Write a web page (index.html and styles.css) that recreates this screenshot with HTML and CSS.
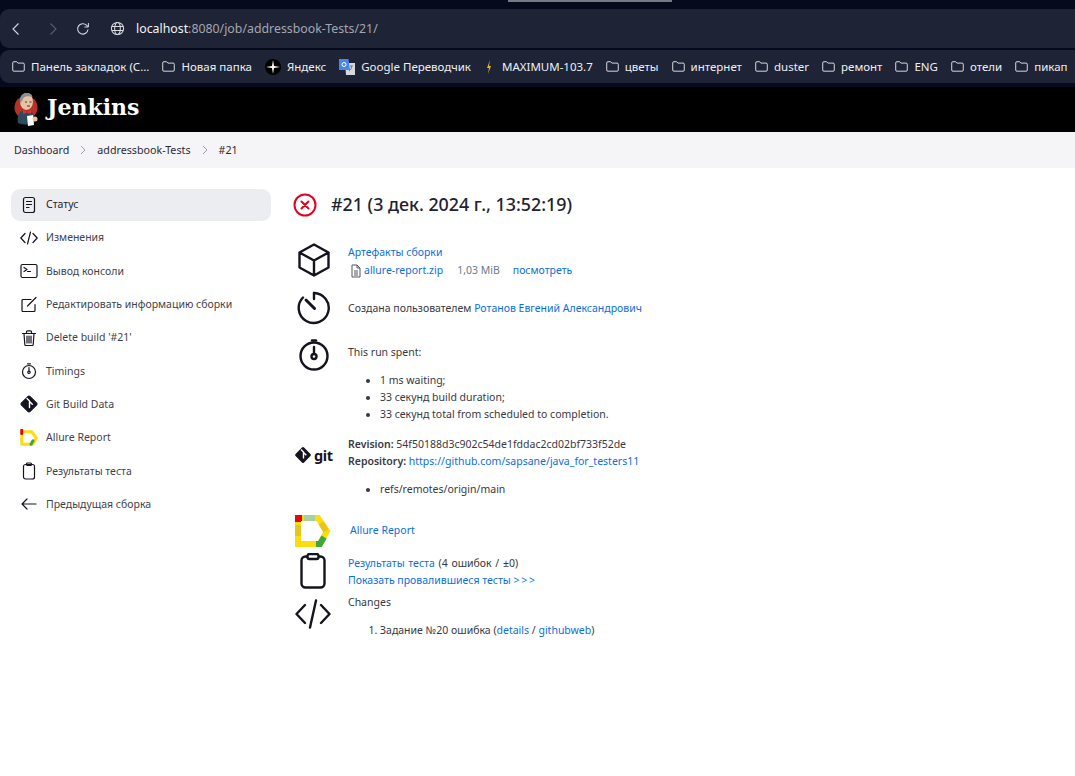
FILE: index.html
```html
<!DOCTYPE html>
<html>
<head>
	<title>Jenkins</title>
	<link rel="stylesheet" href="styles.css">
</head>
<body>
	<div class="chrome">
		<div class="tab-strip"><div class="tab-edge"></div></div>

		<div class="toolbar">
			<svg class="tool tool-back" viewBox="0 0 16 16"><path d="M10.5 2.500 5 8l5.500 5.500"/></svg>
			<svg class="tool tool-forward" viewBox="0 0 16 16"><path d="M5.500 2.500 11 8l-5.500 5.500"/></svg>
			<svg class="tool tool-reload" viewBox="0 0 16 16"><path d="M13 8.500A5.200 5.200 0 1 1 11.500 4.200L13 5.600"/><path d="M13.400 2v4h-4" class="tool-fill"/></svg>
			<svg class="tool tool-globe" viewBox="0 0 16 16"><circle cx="8" cy="8" r="6.500"/><ellipse cx="8" cy="8" rx="3" ry="6.500"/><path d="M2 5.800h12M2 10.200h12"/></svg>
			<div class="url"><span class="url-host">localhost</span>:8080/job/addressbook-Tests/21/</div>
		</div>

		<div class="bookmarks">
			<div class="bookmark"><svg class="folder" viewBox="0 0 14 12"><path d="M.7 2A1.200 1.200 0 0 1 2 .8h3l1.300 1.500h5.700a1.200 1.200 0 0 1 1.300 1.200v6.300a1.200 1.200 0 0 1-1.300 1.300H2A1.200 1.200 0 0 1 .7 9.800z"/></svg>Панель закладок (С...</div>
			<div class="bookmark"><svg class="folder" viewBox="0 0 14 12"><path d="M.7 2A1.200 1.200 0 0 1 2 .8h3l1.300 1.500h5.700a1.200 1.200 0 0 1 1.300 1.200v6.300a1.200 1.200 0 0 1-1.300 1.300H2A1.200 1.200 0 0 1 .7 9.800z"/></svg>Новая папка</div>
			<div class="bookmark"><svg class="fav" viewBox="0 0 16 16"><circle cx="8" cy="8" r="8" fill="#000"/><path d="M8 1 9 7l6 1-6 1-1 6-1-6-6-1 6-1z" fill="#fff"/></svg>Яндекс</div>
			<div class="bookmark"><svg class="fav" viewBox="0 0 16 16"><path d="M6 4h10v12H7z" fill="#d5d8dc"/><path d="M0 0h9.500L11 11H0z" fill="#4a86e8"/><circle cx="5" cy="5.500" r="2" fill="none" stroke="#fff" stroke-width="1"/><path d="M11 7h3M12.500 7c0 3-1 4-2.500 5" fill="none" stroke="#777" stroke-width="1"/></svg>Google Переводчик</div>
			<div class="bookmark"><svg class="fav fav-bolt" viewBox="0 0 10 16"><path d="M6 1 3 9h2l-1 6 3-8H5z" fill="#e8b923"/></svg>MAXIMUM-103.7</div>
			<div class="bookmark"><svg class="folder" viewBox="0 0 14 12"><path d="M.7 2A1.200 1.200 0 0 1 2 .8h3l1.300 1.500h5.700a1.200 1.200 0 0 1 1.300 1.200v6.300a1.200 1.200 0 0 1-1.300 1.300H2A1.200 1.200 0 0 1 .7 9.800z"/></svg>цветы</div>
			<div class="bookmark"><svg class="folder" viewBox="0 0 14 12"><path d="M.7 2A1.200 1.200 0 0 1 2 .8h3l1.300 1.500h5.700a1.200 1.200 0 0 1 1.300 1.200v6.300a1.200 1.200 0 0 1-1.300 1.300H2A1.200 1.200 0 0 1 .7 9.800z"/></svg>интернет</div>
			<div class="bookmark"><svg class="folder" viewBox="0 0 14 12"><path d="M.7 2A1.200 1.200 0 0 1 2 .8h3l1.300 1.500h5.700a1.200 1.200 0 0 1 1.300 1.200v6.300a1.200 1.200 0 0 1-1.300 1.300H2A1.200 1.200 0 0 1 .7 9.800z"/></svg>duster</div>
			<div class="bookmark"><svg class="folder" viewBox="0 0 14 12"><path d="M.7 2A1.200 1.200 0 0 1 2 .8h3l1.300 1.500h5.700a1.200 1.200 0 0 1 1.300 1.200v6.300a1.200 1.200 0 0 1-1.300 1.300H2A1.200 1.200 0 0 1 .7 9.800z"/></svg>ремонт</div>
			<div class="bookmark"><svg class="folder" viewBox="0 0 14 12"><path d="M.7 2A1.200 1.200 0 0 1 2 .8h3l1.300 1.500h5.700a1.200 1.200 0 0 1 1.300 1.200v6.300a1.200 1.200 0 0 1-1.300 1.300H2A1.200 1.200 0 0 1 .7 9.800z"/></svg>ENG</div>
			<div class="bookmark"><svg class="folder" viewBox="0 0 14 12"><path d="M.7 2A1.200 1.200 0 0 1 2 .8h3l1.300 1.500h5.700a1.200 1.200 0 0 1 1.300 1.200v6.300a1.200 1.200 0 0 1-1.300 1.300H2A1.200 1.200 0 0 1 .7 9.800z"/></svg>отели</div>
			<div class="bookmark"><svg class="folder" viewBox="0 0 14 12"><path d="M.7 2A1.200 1.200 0 0 1 2 .8h3l1.300 1.500h5.700a1.200 1.200 0 0 1 1.300 1.200v6.300a1.200 1.200 0 0 1-1.300 1.300H2A1.200 1.200 0 0 1 .7 9.800z"/></svg>пикап</div>
		</div>
	</div>

	<header class="jenkins-header">
		<svg class="jenkins-logo" viewBox="0 0 24 36">
			<circle cx="12" cy="15.500" r="11.500" fill="#b5322a"/>
			<path d="M4 31c-1-5 0-10 4-12l9 1c3 2 4 6 3 11-5 2-11 2-16 0z" fill="#2f4a5c"/>
			<ellipse cx="12.500" cy="9.500" rx="6.500" ry="8.500" fill="#e6c4a2"/>
			<path d="M6 11C5 5 8 1 13 1c3 0 5 1.500 5.500 4C15 3.500 11 4 9.500 6c-1 2-2 4-3.500 5z" fill="#8a8f94"/>
			<path d="M11 10h2M15.500 10h2M13 14h3" stroke="#4a3a30" stroke-width="1" fill="none"/>
			<path d="M9 18l4 2 4-2v4l-4-1.500L9 22z" fill="#d33833"/>
			<path d="M13 24l6-1 1 10-6 1z" fill="#fff"/>
			<circle cx="21" cy="27" r="2.500" fill="#e6c4a2"/>
		</svg>
		<span class="jenkins-name">Jenkins</span>
	</header>

	<nav class="breadcrumbs">
		<span>Dashboard</span>
		<svg class="crumb-sep" viewBox="0 0 8 12"><path d="M2 2l4 4-4 4"/></svg>
		<span>addressbook-Tests</span>
		<svg class="crumb-sep" viewBox="0 0 8 12"><path d="M2 2l4 4-4 4"/></svg>
		<span>#21</span>
	</nav>

	<div class="page">
		<aside class="sidebar">
			<div class="task task-active">
				<svg class="task-icon" viewBox="0 0 18 18"><rect x="3.500" y="1.500" width="11" height="15" rx="2"/><path d="M6.500 5.500h5M6.500 8.500h5M6.500 11.500h2.500"/></svg>
				Статус
			</div>
			<div class="task">
				<svg class="task-icon" viewBox="0 0 18 18"><path d="M5 4.500.8 9 5 13.500M13 4.500 17.200 9 13 13.500M10.500 3 7.500 15"/></svg>
				Изменения
			</div>
			<div class="task">
				<svg class="task-icon" viewBox="0 0 18 18"><rect x="1" y="2.500" width="16" height="13" rx="1.500"/><path d="M4 5.500 7 7.500 4 9.500M7.500 9.500h3"/></svg>
				Вывод консоли
			</div>
			<div class="task">
				<svg class="task-icon" viewBox="0 0 18 18"><path d="M15 9.500v6a1 1 0 0 1-1 1H3a1 1 0 0 1-1-1V5.500a1 1 0 0 1 1-1h8M7.500 11 16 2.500"/></svg>
				Редактировать информацию сборки
			</div>
			<div class="task">
				<svg class="task-icon" viewBox="0 0 18 18"><path d="M2.500 4.500h13M6.500 4.500V2.800a1 1 0 0 1 1-1h3a1 1 0 0 1 1 1v1.700M4 4.500l.8 11a1 1 0 0 0 1 1h6.400a1 1 0 0 0 1-1l.8-11M7 7v7M9 7v7M11 7v7"/></svg>
				Delete build '#21'
			</div>
			<div class="task">
				<svg class="task-icon" viewBox="0 0 18 18"><circle cx="9" cy="10" r="6.500"/><path d="M9 5.500v3.500M7.500 1.800 10.500 1.800"/><circle cx="9" cy="10.300" r="1.200"/></svg>
				Timings
			</div>
			<div class="task">
				<svg class="task-icon git-mark" viewBox="0 0 18 18"><rect x="3" y="3" width="12" height="12" rx="1.500" transform="rotate(45 9 9)"/><path d="M7 3.500 9.500 6v6.500M9.500 6.500l2.800 2.800" class="git-branch"/></svg>
				Git Build Data
			</div>
			<div class="task">
				<svg class="task-icon allure-mark" viewBox="0 0 36 32"><path d="M3.500 3.500h20l9 12.500-7 12.500h-22z" class="allure-base"/><path d="M3.500 0v7" class="allure-red"/><path d="M22 28.500l4-7" class="allure-green"/></svg>
				Allure Report
			</div>
			<div class="task">
				<svg class="task-icon" viewBox="0 0 18 18"><rect x="3.500" y="2.500" width="11" height="14.500" rx="2"/><rect x="6.500" y="1" width="5" height="2.500" rx="1"/></svg>
				Результаты теста
			</div>
			<div class="task">
				<svg class="task-icon" viewBox="0 0 18 18"><path d="M16 9H2M7 4 2 9l5 5"/></svg>
				Предыдущая сборка
			</div>
		</aside>

		<main class="content">
			<h1 class="build-title">
				<svg class="build-status" viewBox="0 0 24 24"><circle cx="12" cy="12" r="10.500"/><path d="M8.500 8.500l7 7M15.500 8.500l-7 7"/></svg>
				<span class="build-name">#21 (3 дек. 2024 г., 13:52:19)</span>
			</h1>

			<section class="row row-artifacts">
				<div class="row-icon">
					<svg class="big-icon" viewBox="0 0 34 34"><path d="M17 1.500 31.500 9.500v15L17 32.500 2.500 24.500v-15zM2.500 9.500 17 17.500 31.500 9.500M17 17.500v15"/></svg>
				</div>
				<div class="row-body">
					<a href="#">Артефакты сборки</a>
					<div class="artifact-line">
						<svg class="file-icon" viewBox="0 0 12 14"><path d="M2 1h5l3 3v9H2zM7 1v3h3M4 7h4M4 9h4M4 11h4"/></svg>
						<a href="#">allure-report.zip</a>
						<span class="file-size">1,03 MiB</span>
						<a href="#">посмотреть</a>
					</div>
				</div>
			</section>

			<section class="row row-user">
				<div class="row-icon">
					<svg class="big-icon" viewBox="0 0 34 34"><path d="M17 2A15 15 0 1 1 6 6.500"/><path d="M17 2v6"/><path d="M9 9l8.500 8.500" class="needle"/></svg>
				</div>
				<div class="row-body">Создана пользователем <a href="#">Ротанов Евгений Александрович</a></div>
			</section>

			<section class="row row-timing">
				<div class="row-icon">
					<svg class="big-icon" viewBox="0 0 34 34"><circle cx="17" cy="18" r="13.500"/><path d="M17 9v7"/><circle cx="17" cy="18.500" r="2.500"/><path d="M15 2.500h4"/></svg>
				</div>
				<div class="row-body row-body-timing">
					This run spent:
					<ul class="plain-list">
						<li>1 ms waiting;</li>
						<li>33 секунд build duration;</li>
						<li>33 секунд total from scheduled to completion.</li>
					</ul>
				</div>
			</section>

			<section class="row row-git">
				<div class="row-icon">
					<svg class="git-logo-mark" viewBox="0 0 18 18"><rect x="3" y="3" width="12" height="12" rx="1.500" transform="rotate(45 9 9)"/><path d="M7 3.500 9.500 6v6.500M9.500 6.500l2.800 2.800" class="git-branch"/></svg>
					<span class="git-word">git</span>
				</div>
				<div class="row-body">
					<div><b>Revision:</b> 54f50188d3c902c54de1fddac2cd02bf733f52de</div>
					<div><b>Repository:</b> <a href="#">https://github.com/sapsane/java_for_testers11</a></div>
					<ul class="plain-list">
						<li>refs/remotes/origin/main</li>
					</ul>
				</div>
			</section>

			<section class="row row-allure">
				<div class="row-icon">
					<svg class="allure-logo" viewBox="0 0 36 32">
						<path d="M3 3h20l9 13-7 13H3z" class="allure-base"/>
						<path d="M3 0v7" class="allure-red"/>
						<path d="M0 3h7" class="allure-red"/>
						<path d="M9 3h11" class="allure-pale"/>
						<path d="M3 10v11" class="allure-dim"/>
						<path d="M26 8l5 8" class="allure-dim"/>
						<path d="M21 29h4l4-7" class="allure-green"/>
					</svg>
				</div>
				<a class="allure-link" href="#">Allure Report</a>
			</section>

			<section class="row row-tests">
				<div class="row-icon">
					<svg class="tests-icon" viewBox="0 0 26 36"><rect x="1.500" y="3.500" width="23" height="31" rx="4"/><rect x="7.500" y="1" width="11" height="5" rx="2"/></svg>
				</div>
				<div class="row-body">
					<div class="test-summary"><a href="#">Результаты теста</a> (4 ошибок / ±0)</div>
					<div><a href="#">Показать провалившиеся тесты &gt;&thinsp;&gt;&thinsp;&gt;</a></div>
				</div>
			</section>

			<section class="row row-changes">
				<div class="row-icon">
					<svg class="changes-icon" viewBox="0 0 36 30"><path d="M10 6 1.500 15 10 24M26 6l8.500 9-8.500 9M21 1.500 15 28.500"/></svg>
				</div>
				<div class="row-body">
					Changes
					<ol class="change-list">
						<li>Задание №20 ошибка (<a href="#">details</a> / <a href="#">githubweb</a>)</li>
					</ol>
				</div>
			</section>
		</main>
	</div>
</body>
</html>
```

FILE: styles.css
```css
* {
    box-sizing: border-box;
}

body {
    margin: 0;
    background-color: #fff;
    color: #383844;
    font-family: "Noto Sans", sans-serif;
    font-size: 10.500px;
    line-height: 17px;
}

a {
    color: #0b6ee0;
    text-decoration: none;
}

ul, ol {
    margin: 0;
    padding: 0;
}

/* browser chrome */
.chrome {
    height: 87px;
    background-color: #050a1c;
}

.tab-strip {
    height: 9px;
}

.tab-edge {
    width: 164px;
    height: 2px;
    margin-left: 508px;
    background-color: #777a80;
}

.toolbar {
    display: flex;
    align-items: center;
    height: 39px;
    background-color: #1e2335;
    border-radius: 9px 0 0 9px;
}

.tool {
    width: 16px;
    height: 16px;
    fill: none;
    stroke: #d8dae0;
    stroke-width: 1.100;
}

.tool-back {
    margin-left: 8px;
}

.tool-forward {
    margin-left: 21px;
    stroke: #5a5e6e;
}

.tool-reload {
    margin-left: 14px;
}

.tool-fill {
    stroke-width: 1;
}

.tool-globe {
    margin-left: 19px;
    width: 15px;
    height: 15px;
}

.url {
    margin-left: 11px;
    font-size: 12.330px;
    color: #a3a7b2;
}

.url-host {
    color: #f2f3f5;
}

.bookmarks {
    display: flex;
    align-items: center;
    gap: 13px;
    height: 33px;
    margin-top: 2px;
    padding-left: 12px;
    background-color: #1e2335;
    border-radius: 9px 0 0 9px;
    color: #eef0f4;
    font-size: 11.500px;
    white-space: nowrap;
    overflow: hidden;
}

.bookmark {
    display: flex;
    align-items: center;
    gap: 6px;
}

.folder {
    width: 13px;
    height: 11px;
    fill: none;
    stroke: #e8eaee;
    stroke-width: 1;
}

.fav {
    width: 16px;
    height: 16px;
}

.fav-bolt {
    width: 10px;
    margin-right: 2px;
}

/* jenkins header */
.jenkins-header {
    display: flex;
    align-items: center;
    height: 45px;
    padding-left: 14px;
    background-color: #000;
}

.jenkins-logo {
    width: 24px;
    height: 36px;
}

.jenkins-name {
    margin: 0 0 4px 9px;
    color: #fff;
    font-family: "DejaVu Serif", serif;
    font-size: 22px;
    font-weight: 700;
}

.breadcrumbs {
    display: flex;
    align-items: center;
    gap: 10px;
    height: 36px;
    padding-left: 14px;
    background-color: #f5f5f7;
    color: #2b2b38;
    font-size: 10.700px;
}

.crumb-sep {
    width: 8px;
    height: 12px;
    fill: none;
    stroke: #9aa3b5;
    stroke-width: 1;
}

/* page layout */
.page {
    display: flex;
    padding: 21px 0 0 11px;
}

.sidebar {
    display: flex;
    flex-direction: column;
    gap: 1.330px;
    width: 260px;
    flex-shrink: 0;
}

.task {
    display: flex;
    align-items: center;
    gap: 8px;
    height: 32px;
    padding: 0 0 1px 9px;
    border-radius: 9px;
    color: #3f3f4c;
}

.task-active {
    background-color: #ecedf1;
    color: #22222e;
}

.task-icon {
    width: 18px;
    height: 18px;
    fill: none;
    stroke: #14141f;
    stroke-width: 1.200;
    stroke-linecap: round;
    stroke-linejoin: round;
}

.git-mark rect {
    fill: #14141f;
}

.git-branch {
    fill: none;
    stroke: #fff;
    stroke-width: 1.400;
}

.allure-base {
    fill: none;
    stroke: #fddc12;
    stroke-width: 6;
}

.allure-red {
    fill: none;
    stroke: #e30613;
    stroke-width: 6;
}

.allure-green {
    fill: none;
    stroke: #3fa63f;
    stroke-width: 6;
}

.allure-pale {
    fill: none;
    stroke: #a8d29b;
    stroke-width: 6;
}

.allure-dim {
    fill: none;
    stroke: #e3c81b;
    stroke-width: 6;
}

.content {
    margin-left: 22px;
}

.build-title {
    display: flex;
    align-items: center;
    gap: 14px;
    height: 32px;
    margin: 0;
    color: #22222e;
    font-size: 17.850px;
    font-weight: 500;
    line-height: 30px;
}

.build-name {
    padding-bottom: 2px;
}

.build-status {
    width: 24px;
    height: 24px;
    fill: none;
    stroke: #e6001f;
    stroke-width: 2;
    stroke-linecap: round;
}

.row {
    display: flex;
}

.row-icon {
    flex-shrink: 0;
    width: 55px;
}

.big-icon {
    display: block;
    width: 34px;
    height: 34px;
    margin-left: 4px;
    fill: none;
    stroke: #14141f;
    stroke-width: 2.400;
    stroke-linecap: round;
    stroke-linejoin: round;
}

.needle {
    stroke-width: 3;
}

.row-artifacts {
    margin-top: 22px;
}

.row-artifacts .row-body {
    padding-top: 1px;
}

.artifact-line {
    display: flex;
    align-items: center;
    margin-top: 1px;
}

.file-icon {
    width: 12px;
    height: 14px;
    margin: 0 2px 0 2px;
    fill: none;
    stroke: #55555f;
    stroke-width: 1;
}

.file-size {
    margin: 0 13px 0 14px;
    color: #6b7a90;
}

.row-user {
    align-items: center;
    margin-top: 12px;
}

.row-timing {
    margin-top: 13px;
}

.row-body-timing {
    padding-top: 6px;
}

.plain-list {
    margin-top: 11px;
    padding-left: 32px;
}

.row-git {
    margin-top: 13px;
}

.row-git .row-icon {
    display: flex;
    align-items: center;
    gap: 2px;
    height: 38px;
    margin-left: 1px;
    margin-right: -1px;
}

.git-logo-mark {
    width: 18px;
    height: 18px;
}

.git-logo-mark rect {
    fill: #14141f;
}

.git-word {
    color: #14141f;
    font-size: 14.500px;
    font-weight: 700;
    letter-spacing: -.4px;
}

.row-git b {
    font-weight: 600;
}

.row-allure {
    align-items: center;
    margin-top: 17px;
}

.allure-logo {
    display: block;
    width: 36px;
    height: 32px;
    margin-left: 2px;
}

.allure-link {
    margin: 0 0 1px 2px;
}

.row-tests {
    margin-top: 6px;
}

.row-tests .row-body {
    padding-top: 2px;
}

.test-summary {
    word-spacing: 1px;
}

.tests-icon {
    display: block;
    width: 26px;
    height: 36px;
    margin-left: 7px;
    fill: #fff;
    stroke: #14141f;
    stroke-width: 2.400;
}

.row-changes {
    margin-top: 4px;
}

.row-changes .row-body {
    padding-top: 1px;
}

.changes-icon {
    display: block;
    width: 36px;
    height: 30px;
    margin: 6px 0 0 2px;
    fill: none;
    stroke: #14141f;
    stroke-width: 2.400;
    stroke-linecap: round;
    stroke-linejoin: round;
}

.change-list {
    margin-top: 11px;
    padding-left: 32px;
}
```
